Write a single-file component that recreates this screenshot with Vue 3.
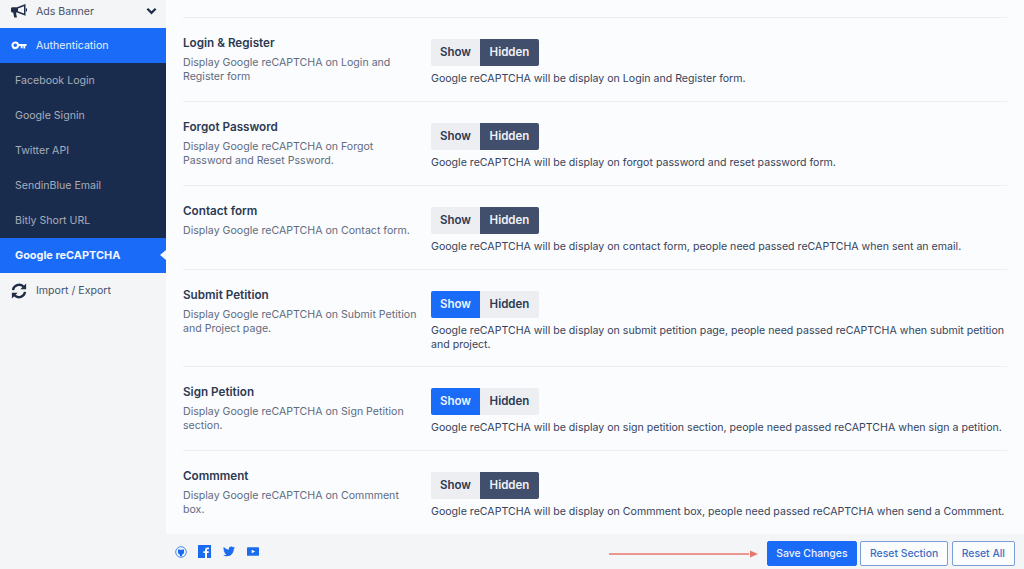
<script setup>
const subs = ['Facebook Login', 'Google Signin', 'Twitter API', 'SendinBlue Email', 'Bitly Short URL']
const rows = [
  { t: 'Login & Register', d: 'Display Google reCAPTCHA on Login and Register form', h: 'Google reCAPTCHA will be display on Login and Register form.', show: false },
  { t: 'Forgot Password', d: 'Display Google reCAPTCHA on Forgot Password and Reset Pssword.', h: 'Google reCAPTCHA will be display on forgot password and reset password form.', show: false },
  { t: 'Contact form', d: 'Display Google reCAPTCHA on Contact form.', h: 'Google reCAPTCHA will be display on contact form, people need passed reCAPTCHA when sent an email.', show: false },
  { t: 'Submit Petition', d: 'Display Google reCAPTCHA on Submit Petition and Project page.', h: 'Google reCAPTCHA will be display on submit petition page, people need passed reCAPTCHA when submit petition and project.', show: true },
  { t: 'Sign Petition', d: 'Display Google reCAPTCHA on Sign Petition section.', h: 'Google reCAPTCHA will be display on sign petition section, people need passed reCAPTCHA when sign a petition.', show: true },
  { t: 'Commment', d: 'Display Google reCAPTCHA on Commment box.', h: 'Google reCAPTCHA will be display on Commment box, people need passed reCAPTCHA when send a Commment.', show: false },
]
</script>

<template>
  <div class="app">
    <aside class="side">
      <div class="item top">
        <svg class="ic" viewBox="0 0 16 14" width="16" height="14"><path fill="#1f2d46" d="M14.500 0 6 3.200H1.500C.6 3.200 0 3.900 0 4.700v2.400c0 .8.600 1.500 1.500 1.500h.7l1 4.900h2.700L5 8.600h1l8.500 3.200zM13 2.300v7.200L7 7.300V4.500z"/><rect x="14.800" y="4.400" width="1.200" height="3" fill="#1f2d46"/></svg>
        <span>Ads Banner</span>
        <svg class="chev" viewBox="0 0 12 8" width="11" height="8"><path d="M1.500 1.500 6 6l4.500-4.500" fill="none" stroke="#1f2d46" stroke-width="2.400"/></svg>
      </div>
      <div class="item active">
        <svg class="ic" viewBox="0 0 18 10" width="16" height="9"><path fill="#fff" fill-rule="evenodd" d="M4.800.500a4.300 4.300 0 1 1-4.100 5.600 4.300 4.300 0 0 1 4.100-5.600zm0 2.300a2 2 0 1 0 0 4 2 2 0 0 0 0-4z"/><path fill="#fff" d="M8.500 3.300H17.500V5.700H16V8.500H14V5.700H13V8H11V5.700H8.500z"/></svg>
        <span>Authentication</span>
      </div>
      <div v-for="s in subs" :key="s" class="sub">{{ s }}</div>
      <div class="sub current">Google reCAPTCHA</div>
      <div class="item">
        <svg class="ic" viewBox="0 0 18 18" width="16" height="16"><path fill="none" stroke="#1f2d46" stroke-width="2.600" d="M2.200 8A7 7 0 0 1 14 4M15.800 10A7 7 0 0 1 4 14"/><path fill="#1f2d46" d="M17 .5V7h-6.500zM1 17.500V11h6.500z"/></svg>
        <span>Import / Export</span>
      </div>
    </aside>

    <div class="main">
      <div class="content">
        <section v-for="r in rows" :key="r.t" class="row">
          <div class="left">
            <h3>{{ r.t }}</h3>
            <p>{{ r.d }}</p>
          </div>
          <div class="right">
            <div class="toggle">
              <span class="show" :class="{ on: r.show }">Show</span>
              <span class="hid" :class="{ on: !r.show }">Hidden</span>
            </div>
            <p>{{ r.h }}</p>
          </div>
        </section>
      </div>
      <footer class="foot">
        <div class="social">
          <svg class="gh" viewBox="0 0 14 14" width="12" height="12"><circle cx="7" cy="7" r="6.200" fill="none" stroke="#1a6bf0" stroke-width=".9"/><path fill="#1a6bf0" d="M3.500 4h2l1.500.6L8.500 4h2v3.500a3.500 3.500 0 0 1-2.300 2.800V12H5.800v-1.700A3.500 3.500 0 0 1 3.500 7.500z"/></svg>
          <svg viewBox="0 0 14 14" width="13" height="13"><rect width="14" height="14" fill="#1a6bf0"/><path fill="#fff" d="M9.700 14V8.700h1.700l.3-2H9.700V5.500c0-.6.200-1 1-1h1.100V2.700c-.3 0-.9-.1-1.600-.1-1.600 0-2.600 1-2.600 2.700v1.400H5.800v2h1.800V14z"/></svg>
          <svg viewBox="0 0 24 20" width="12" height="11"><path fill="#1a6bf0" d="M24 2.400c-.9.400-1.800.7-2.800.8 1-.6 1.800-1.600 2.200-2.700-1 .6-2 1-3.100 1.200A4.900 4.900 0 0 0 11.900 6.200C7.800 6 4.200 4 1.700.9a4.900 4.900 0 0 0 1.500 6.600c-.8 0-1.600-.2-2.200-.6 0 2.400 1.700 4.400 3.900 4.900-.7.200-1.500.2-2.200.1.600 2 2.400 3.400 4.600 3.400A9.900 9.900 0 0 1 0 17.300 14 14 0 0 0 7.500 19.500c9.100 0 14.300-7.700 14-14.600 1-.7 1.800-1.500 2.500-2.500z"/></svg>
          <svg viewBox="0 0 14 10" width="12" height="9"><rect width="14" height="10" rx="1" fill="#1a6bf0"/><path fill="#fff" d="M5.500 3 9.500 5l-4 2z"/></svg>
        </div>
        <div class="actions">
          <svg class="arrow" viewBox="0 0 149 8" width="149" height="8"><path d="M0 4h140" stroke="#e8766c" stroke-width="1.600"/><path fill="#e8766c" d="M141 .5 149 4l-8 3.500z"/></svg>
          <button class="btn primary">Save Changes</button>
          <button class="btn">Reset Section</button>
          <button class="btn">Reset All</button>
        </div>
      </footer>
    </div>
  </div>
</template>

<style>
html, body { margin: 0; overflow: hidden; }
</style>

<style scoped>
.app {
  display: flex;
  width: 1024px;
  height: 569px;
  overflow: hidden;
  font-family: Inter, "Liberation Sans", sans-serif;
  font-size: 10.600px;
  background: #f4f5f7;
}
.side {
  width: 166px;
  flex: none;
  margin-top: -7px;
}
.item, .sub {
  height: 35px;
  display: flex;
  align-items: center;
  box-sizing: border-box;
}
.item {
  padding-left: 11px;
  color: #46536a;
  position: relative;
}
.ic { width: 16px; margin-right: 9px; flex: none; }
.chev { position: absolute; right: 9px; top: 14px; }
.item.top span { padding-top: 1px; }
.item.active { background: #1a6bf7; color: #e8f0ff; }
.sub { background: #1a2c4e; color: #a6aebb; padding-left: 15px; }
.sub.current {
  background: #1a6bf7;
  color: #f2f6ff;
  font-weight: 700;
  font-size: 10.900px;
  padding-bottom: 2px;
  position: relative;
}
.sub.current::after {
  content: "";
  position: absolute;
  right: 0;
  top: 12px;
  border: 5.500px solid transparent;
  border-right: 6px solid #f7f8fa;
  border-left: 0;
}
.main {
  flex: 1;
  min-width: 0;
  display: flex;
  flex-direction: column;
}
.content {
  flex: 1;
  min-height: 0;
  background: #fbfcfe;
  padding: 17px 17px 0;
  overflow: hidden;
}
.row {
  display: flex;
  min-height: 84px;
  border-top: 1px solid #eceef1;
  box-sizing: border-box;
  padding: 18px 0 14px;
}
.left { width: 248px; flex: none; }
.left h3 {
  margin: 0 0 5px;
  font-size: 11.700px;
  line-height: 15px;
  font-weight: 600;
  color: #2c3a52;
}
.left p {
  margin: 0;
  width: 240px;
  line-height: 14px;
  color: #5f6b80;
}
.right { flex: 1; min-width: 0; margin-top: 3px; }
.right p {
  margin: 6px 0 0;
  line-height: 14px;
  color: #36435a;
}
.toggle {
  display: inline-flex;
  vertical-align: top;
  height: 27px;
  border-radius: 2px;
  overflow: hidden;
  font-weight: 600;
  font-size: 11.500px;
  line-height: 27px;
  text-align: center;
  background: #eceef2;
  color: #2c3a52;
}
.show { width: 49px; }
.hid { width: 59px; }
.show.on { background: #1a6bf7; color: #eef4ff; }
.hid.on { background: #414f6c; color: #f0f2f6; }
.foot {
  height: 35px;
  flex: none;
  display: flex;
  align-items: center;
  justify-content: space-between;
  padding: 0 9px;
}
.social { display: flex; align-items: center; gap: 12px; }
.gh { margin-right: -1px; }
.actions { display: flex; align-items: center; gap: 3.500px; padding-top: 4px; }
.arrow { margin-right: 5.500px; }
.btn {
  height: 25px;
  box-sizing: border-box;
  border: 1px solid #7a9ed8;
  border-radius: 2px;
  background: #fbfcfe;
  color: #3b6fc4;
  font: 500 10.400px Inter, "Liberation Sans", sans-serif;
  padding: 0 9px;
}
.btn.primary {
  background: #1a6bf7;
  border-color: #1a6bf7;
  color: #f0f5ff;
  padding: 0 8.500px;
  margin-right: -0.500px;
}
</style>
